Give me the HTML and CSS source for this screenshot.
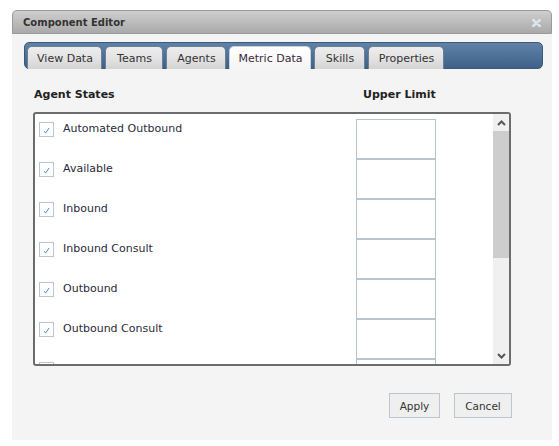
FILE: index.html
```html
<!DOCTYPE html>
<html>
<head>
<meta charset="utf-8">
<title>Component Editor</title>
<link rel="stylesheet" href="styles.css">
</head>
<body>
<div class="dialog">
  <div class="titlebar">
    <span class="title">Component Editor</span>
    <svg class="close" width="9" height="8" viewBox="0 0 9 8"><path d="M1.2 1 L7.8 7 M7.8 1 L1.2 7" stroke="#dbe5ee" stroke-width="2.4" stroke-linecap="round"/></svg>
  </div>
  <div class="body">
    <div class="tabbar">
      <div class="tab t-view">View Data</div>
      <div class="tab t-teams">Teams</div>
      <div class="tab t-agents">Agents</div>
      <div class="tab t-metric active">Metric Data</div>
      <div class="tab t-skills">Skills</div>
      <div class="tab t-props">Properties</div>
    </div>
    <div class="panel">
      <div class="heads">
        <div class="head-states">Agent States</div>
        <div class="head-limit">Upper Limit</div>
      </div>
      <div class="listbox">
        <div class="rows">
          <div class="row"><span class="cb"><svg width="7" height="7" viewBox="0 0 7 7"><path d="M1 4.2 L2.7 6 L6 1" fill="none" stroke="#3f8fd2" stroke-width="1"/></svg></span><span class="label">Automated Outbound</span><span class="limit"></span></div>
          <div class="row"><span class="cb"><svg width="7" height="7" viewBox="0 0 7 7"><path d="M1 4.2 L2.7 6 L6 1" fill="none" stroke="#3f8fd2" stroke-width="1"/></svg></span><span class="label">Available</span><span class="limit"></span></div>
          <div class="row"><span class="cb"><svg width="7" height="7" viewBox="0 0 7 7"><path d="M1 4.2 L2.7 6 L6 1" fill="none" stroke="#3f8fd2" stroke-width="1"/></svg></span><span class="label">Inbound</span><span class="limit"></span></div>
          <div class="row"><span class="cb"><svg width="7" height="7" viewBox="0 0 7 7"><path d="M1 4.2 L2.7 6 L6 1" fill="none" stroke="#3f8fd2" stroke-width="1"/></svg></span><span class="label">Inbound Consult</span><span class="limit"></span></div>
          <div class="row"><span class="cb"><svg width="7" height="7" viewBox="0 0 7 7"><path d="M1 4.2 L2.7 6 L6 1" fill="none" stroke="#3f8fd2" stroke-width="1"/></svg></span><span class="label">Outbound</span><span class="limit"></span></div>
          <div class="row"><span class="cb"><svg width="7" height="7" viewBox="0 0 7 7"><path d="M1 4.2 L2.7 6 L6 1" fill="none" stroke="#3f8fd2" stroke-width="1"/></svg></span><span class="label">Outbound Consult</span><span class="limit"></span></div>
          <div class="row"><span class="cb"></span><span class="label">Unavailable</span><span class="limit"></span></div>
        </div>
        <div class="scrollbar">
          <div class="arrow"><svg width="9" height="6" viewBox="0 0 9 6"><path d="M1 5 L4.5 1.5 L8 5" fill="none" stroke="#555" stroke-width="2"/></svg></div>
          <div class="track"><div class="thumb"></div></div>
          <div class="arrow"><svg width="9" height="6" viewBox="0 0 9 6"><path d="M1 1 L4.5 4.5 L8 1" fill="none" stroke="#555" stroke-width="2"/></svg></div>
        </div>
      </div>
      <div class="buttons">
        <button class="btn btn-apply">Apply</button>
        <button class="btn btn-cancel">Cancel</button>
      </div>
    </div>
  </div>
</div>
</body>
</html>
```
FILE: styles.css
```css
html, body {
  margin: 0;
  padding: 0;
  background: #ffffff;
}
body {
  font-family: "DejaVu Sans", Verdana, sans-serif;
  font-size: 11px;
  color: #333333;
}
.dialog {
  margin: 10px 0 0 12px;
  width: 540px;
  height: 430px;
  background: #f4f4f4;
  box-sizing: border-box;
}
.titlebar {
  height: 24px;
  box-sizing: border-box;
  border: 1px solid #9a9a9a;
  border-radius: 5px 5px 0 0;
  background: linear-gradient(#cfcfcf, #a9a9a9);
  display: flex;
  align-items: center;
  justify-content: space-between;
  padding: 1px 10px 0 10px;
}
.title {
  font-weight: bold;
  font-size: 10px;
  color: #333;
}
.close {
  display: block;
}
.body {
  padding: 8px 9px 0 12px;
}
.tabbar {
  height: 27px;
  box-sizing: border-box;
  border: 1px solid #3d5878;
  border-radius: 5px;
  background: linear-gradient(#5e82a8, #3e6189);
  display: flex;
  align-items: flex-end;
  gap: 3px;
  padding-left: 2px;
}
.tab {
  height: 23px;
  margin-bottom: -1px;
  box-sizing: border-box;
  padding: 1px 0 0 1px;
  border: 1px solid #6d7f93;
  border-bottom: none;
  border-radius: 5px 5px 0 0;
  background: linear-gradient(#ededed 0%, #e2e2e2 55%, #d3d3d3 100%);
  display: flex;
  align-items: center;
  justify-content: center;
  font-size: 11px;
  color: #333;
  white-space: nowrap;
}
.t-view { width: 75px; }
.t-teams { width: 58px; }
.t-agents { width: 60px; }
.t-metric { width: 82px; }
.t-skills { width: 51px; }
.t-props { width: 76px; }
.tab.active {
  background: linear-gradient(#ffffff, #f4f4f4);
  border-color: #c9d1da;
  color: #3a2a3a;
}
.panel {
  padding-left: 9px;
}
.heads {
  display: flex;
  height: 43px;
  box-sizing: border-box;
  padding-top: 7px;
  align-items: center;
  font-weight: bold;
  font-size: 11px;
  color: #222;
}
.head-states {
  width: 329px;
  padding-left: 1px;
}
.listbox {
  width: 478px;
  height: 254px;
  box-sizing: border-box;
  border: 2px solid #6c6c6c;
  border-radius: 3px;
  background: #ffffff;
  display: flex;
  overflow: hidden;
}
.rows {
  flex: 1;
  overflow: hidden;
  padding-top: 5px;
}
.row {
  display: flex;
  align-items: flex-start;
  height: 40px;
  padding-left: 4px;
}
.cb {
  width: 15px;
  height: 15px;
  box-sizing: border-box;
  border: 1px solid #bac6ce;
  margin-top: 3px;
  display: flex;
  align-items: center;
  justify-content: center;
  flex: none;
}
.cb svg {
  display: block;
  margin-top: 1px;
}
.label {
  width: 293px;
  padding-left: 9px;
  font-size: 11px;
  line-height: 16px;
  margin-top: 2px;
  color: #2b2b3a;
  flex: none;
  white-space: nowrap;
}
.limit {
  width: 80px;
  height: 40px;
  box-sizing: border-box;
  border: 1px solid #b8c5cd;
  background: #fff;
  flex: none;
}
.scrollbar {
  width: 16px;
  background: #f0f0f0;
  display: flex;
  flex-direction: column;
}
.arrow {
  height: 17px;
  display: flex;
  align-items: center;
  justify-content: center;
}
.track {
  flex: 1;
}
.thumb {
  height: 127px;
  background: #cdcdcd;
}
.buttons {
  width: 479px;
  display: flex;
  justify-content: flex-end;
  gap: 14px;
  margin-top: 27px;
}
.btn {
  height: 25px;
  box-sizing: border-box;
  border: 1px solid #b8c7d0;
  background: #efefef;
  font-family: "DejaVu Sans", Verdana, sans-serif;
  font-size: 10.5px;
  color: #333;
  padding: 0;
  margin: 0;
}
.btn-apply { width: 51px; }
.btn-cancel { width: 58px; }
```
